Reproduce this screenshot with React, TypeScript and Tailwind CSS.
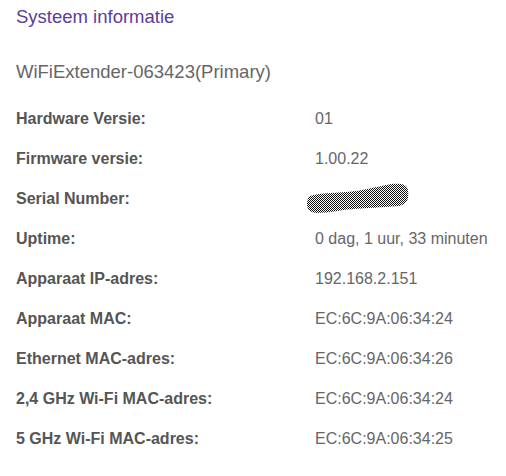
const rows: { label: string; value: string | null }[] = [
  { label: "Hardware Versie", value: "01" },
  { label: "Firmware versie", value: "1.00.22" },
  { label: "Serial Number", value: null },
  { label: "Uptime", value: "0 dag, 1 uur, 33 minuten" },
  { label: "Apparaat IP-adres", value: "192.168.2.151" },
  { label: "Apparaat MAC", value: "EC:6C:9A:06:34:24" },
  { label: "Ethernet MAC-adres", value: "EC:6C:9A:06:34:26" },
  { label: "2,4 GHz Wi-Fi MAC-adres", value: "EC:6C:9A:06:34:24" },
  { label: "5 GHz Wi-Fi MAC-adres", value: "EC:6C:9A:06:34:25" },
];

// redacted serial: dithered marker blot
function Scribble() {
  return (
    <svg width="102" height="31" viewBox="0 0 102 31" className="block -ml-[8px] -mt-[1px]">
      <defs>
        <pattern id="chk" width="2" height="2" patternUnits="userSpaceOnUse">
          <rect width="2" height="2" fill="#fff" />
          <rect width="1" height="1" fill="#111" />
          <rect x="1" y="1" width="1" height="1" fill="#111" />
        </pattern>
      </defs>
      <path
        d="M3 13 C12 10 25 10 40 9 C55 8 68 4 84 1 C94 0 100 1 101 7 C102 15 101 21 92 23 C78 24 62 25 46 26 C32 27 22 30 11 30 C4 30 0 27 0 21 C0 17 1 14 3 13 Z"
        fill="url(#chk)"
      />
    </svg>
  );
}

export default function App() {
  return (
    <div className="w-[506px] h-[476px] bg-white px-[16px] pt-[5px]" style={{ fontFamily: "'Liberation Sans', Arial, sans-serif" }}>
      <h1 className="text-[18.5px] leading-[24px] text-[#5c3c9c]">Systeem informatie</h1>
      <h2 className="mt-[31px] text-[18.5px] leading-[24px] text-[#666]">WiFiExtender-063423(Primary)</h2>
      <div className="mt-[15px] flex flex-col">
        {rows.map((r) => (
          <div key={r.label} className="flex items-center h-[40px]">
            <div className="w-[299px] text-[16px] font-bold text-[#555]">{r.label}:</div>
            <div className="text-[16px] text-[#666]">{r.value ?? <Scribble />}</div>
          </div>
        ))}
      </div>
    </div>
  );
}
